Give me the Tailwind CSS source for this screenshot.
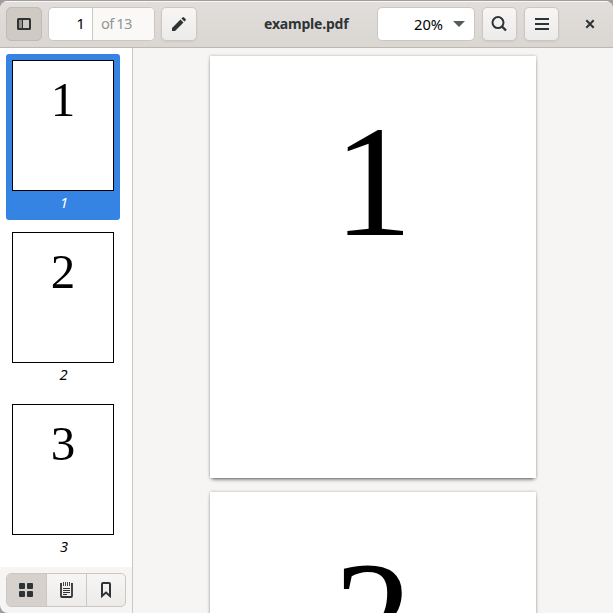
<!DOCTYPE html>
<html lang="en">
<head>
<meta charset="utf-8">
<title>example.pdf</title>
<script src="https://cdn.jsdelivr.net/npm/@tailwindcss/browser@4"></script>
</head>
<body class="h-[613px] w-[613px] overflow-hidden bg-[#a09d9a] font-['Noto_Sans',sans-serif] text-[14.67px] text-[#2e3436]">
<div class="h-full pt-px">
<div class="flex h-[612px] flex-col overflow-hidden rounded-t-[8px] rounded-bl-[8px] bg-[#f6f5f4]">
  <header class="relative flex h-[47px] shrink-0 items-center border-b border-[#bfb8b1] bg-linear-to-b from-[#e1dedb] to-[#dad6d2] pl-[6px] shadow-[inset_0_1px_#f9f8f7]">
    <button class="flex h-[34px] w-9 items-center justify-center rounded-[5px] border border-[#c1bbb4] bg-[#cfcac4]">
      <svg width="16" height="16" viewBox="0 0 16 16" fill="none" stroke="#2e3436"><path d="M3 4h3v8H3z" fill="#979694" stroke="none"/><rect x="2" y="3" width="12" height="10" rx=".6" stroke-width="2"/><path d="M6.5 3v10"/></svg>
    </button>
    <div class="ml-[6px] flex h-[34px] w-[107px] overflow-hidden rounded-[5px] border border-[#cdc7c2] bg-white leading-[31px]">
      <div class="w-[44px] border-r border-[#cdc7c2] pr-[7px] text-right text-black">1</div>
      <div class="flex-1 bg-[#faf9f8] pl-[8px] tracking-[-0.5px] [word-spacing:-1px] text-[#929595]">of 13</div>
    </div>
    <button class="ml-[6px] flex h-[34px] w-9 items-center justify-center rounded-[5px] border border-[#cdc7c2] bg-linear-to-b from-[#f7f6f5] to-[#edebe9] shadow-[0_1px_2px_#0001]">
      <svg width="16" height="16" viewBox="0 0 16 16" fill="#2e3436"><path d="M1 15v-3l8.5-8.5 3 3L4 15zM10.4 2.6l1.2-1.2q.7-.7 1.4 0l1.6 1.6q.7.7 0 1.4l-1.2 1.2z"/></svg>
    </button>
    <div class="ml-[67px] w-[85px] text-[14px] leading-5 font-bold tracking-[-0.2px] whitespace-nowrap">example.pdf</div>
    <div class="ml-[28px] flex h-[34px] w-[98px] items-center rounded-[5px] border border-[#cdc7c2] bg-white pl-[36px] text-black">
      <span class="w-[32px] pb-px text-[14.67px]">20%</span>
      <svg class="ml-[7px]" width="12" height="6" viewBox="0 0 12 6" fill="#555b5b"><path d="M0 0h12L6 6z"/></svg>
    </div>
    <button class="ml-[7px] flex h-[34px] w-[35px] items-center justify-start rounded-[5px] border border-[#cdc7c2] bg-linear-to-b from-[#f7f6f5] to-[#edebe9] pl-[8px] shadow-[0_1px_2px_#0001]">
      <svg width="16" height="16" viewBox="0 0 16 16" fill="none" stroke="#2e3436" stroke-width="2"><circle cx="7" cy="6.6" r="5.5"/><path d="M11 10.5l4 4" stroke-width="2.4"/></svg>
    </button>
    <button class="ml-[7px] flex h-[34px] w-[35px] items-center justify-start rounded-[5px] border border-[#cdc7c2] bg-linear-to-b from-[#f7f6f5] to-[#edebe9] pl-[9px] shadow-[0_1px_2px_#0001]">
      <svg width="16" height="16" viewBox="0 0 16 16" fill="#2e3436"><path d="M1 2h14v2H1zM1 7h14v2H1zM1 12h14v2H1z"/></svg>
    </button>
    <svg class="ml-[23px]" width="16" height="16" viewBox="0 0 16 16" fill="none" stroke="#2e3436" stroke-width="2.1"><path d="M4.3 4.3l7.4 7.4M11.7 4.3l-7.4 7.4"/></svg>
  </header>
  <div class="flex min-h-0 flex-1">
    <aside class="flex w-[133px] shrink-0 flex-col border-r border-[#cdc7c2]">
      <div class="flex h-[519px] flex-col gap-[6px] bg-white px-[6px] pt-[6px] text-black">
        <div class="h-[166px] w-[114px] rounded-[3px] bg-[#3584e4] p-[6px] text-center text-white">
          <div class="h-[131px] w-[102px] border border-black bg-white font-['Liberation_Serif',serif] text-[49px] leading-[77px] text-black">1</div>
          <div class="pl-[2px] text-[14.67px] leading-[22px] italic">1</div>
        </div>
        <div class="h-[166px] w-[114px] p-[6px] text-center">
          <div class="h-[131px] w-[102px] border border-black bg-white font-['Liberation_Serif',serif] text-[49px] leading-[77px]">2</div>
          <div class="pl-px text-[14.67px] leading-[22px] italic">2</div>
        </div>
        <div class="h-[166px] w-[114px] p-[6px] text-center">
          <div class="h-[131px] w-[102px] border border-black bg-white font-['Liberation_Serif',serif] text-[49px] leading-[77px]">3</div>
          <div class="pl-[2px] text-[14.67px] leading-[22px] italic">3</div>
        </div>
      </div>
      <div class="flex flex-1 pt-[6px] pl-[6px]">
        <div class="flex h-[34px] w-[120px] overflow-hidden rounded-[5px] border border-[#cdc7c2] bg-linear-to-b from-[#f7f6f5] to-[#edebe9]">
          <button class="flex w-[40px] items-center border-r border-[#cdc7c2] bg-[#d6d1cd] pl-[11px]">
            <svg width="16" height="16" viewBox="0 0 16 16" fill="#2e3436"><rect x="1" y="1" width="6" height="6" rx="1"/><rect x="9" y="1" width="6" height="6" rx="1"/><rect x="1" y="9" width="6" height="6" rx="1"/><rect x="9" y="9" width="6" height="6" rx="1"/></svg>
          </button>
          <button class="flex w-[40px] items-center border-r border-[#cdc7c2] pl-[11px]">
            <svg width="16" height="16" viewBox="0 0 16 16" fill="none" stroke="#2e3436"><path d="M4 2H3v12q0 1 1 1h9q1 0 1-1V2h-1" stroke-width="1.8"/><path d="M5.5 0v4M7.5 0v4M9.500 0v4M11.500 0v4" stroke-width=".9"/><path d="M5 6.500h7M5 8.500h7M5 10.500h7M5 12.500h4"/></svg>
          </button>
          <button class="flex flex-1 items-center justify-center">
            <svg width="16" height="16" viewBox="0 0 16 16" fill="none" stroke="#2e3436" stroke-width="2"><path d="M4 14V2q0-1 1-1h6q1 0 1 1v12L8 10.500z"/></svg>
          </button>
        </div>
      </div>
    </aside>
    <main class="flex flex-1 flex-col items-center gap-[14px] overflow-hidden pt-[8px] text-center font-['Liberation_Serif',serif] text-[158px] leading-[251px] text-black">
      <div class="h-[422px] w-[326px] shrink-0 bg-white shadow-[0_0_3px_#0004,0_3px_4px_-2px_#0009]">1</div>
      <div class="h-[422px] w-[326px] shrink-0 bg-white shadow-[0_0_3px_#0004,0_3px_4px_-2px_#0009]">2</div>
    </main>
  </div>
</div>
</div>
</body>
</html>
